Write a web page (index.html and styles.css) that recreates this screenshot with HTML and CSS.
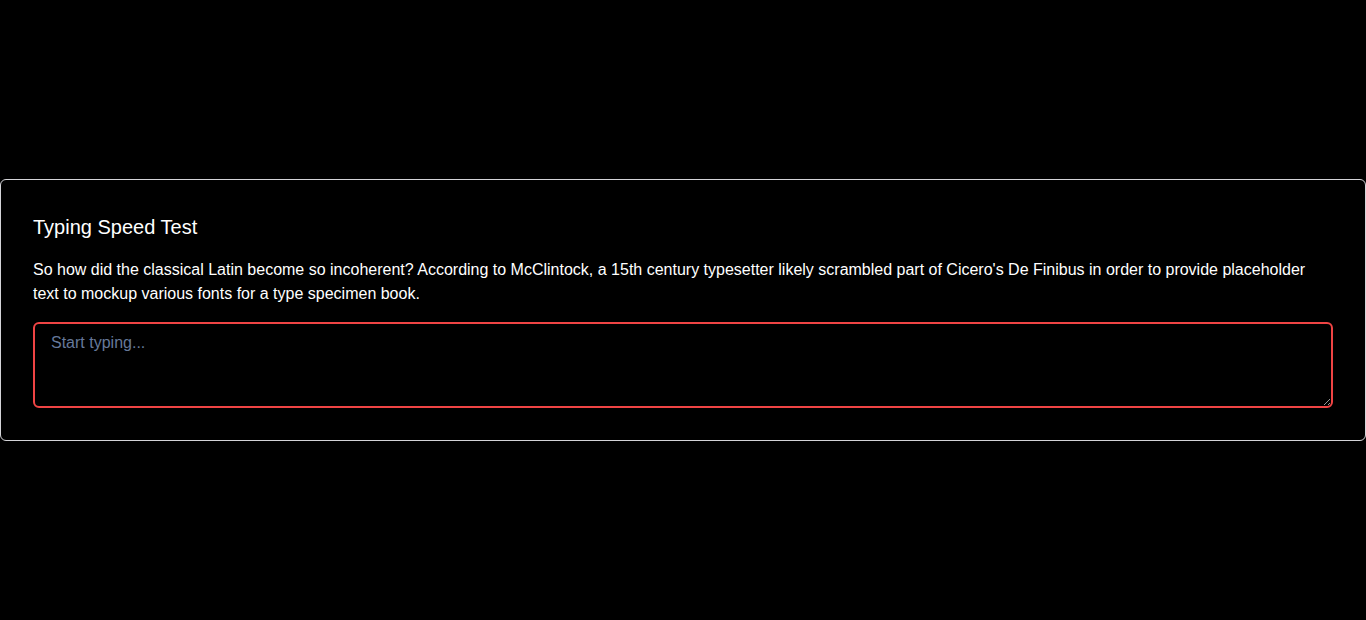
FILE: index.html
```html
<!DOCTYPE html>
<html lang="en">
<head>
<meta charset="utf-8">
<title>Typing Speed Test</title>
<link rel="stylesheet" href="styles.css">
</head>
<body>
<main class="page">
  <section class="card">
    <h1 class="card-title">Typing Speed Test</h1>
    <p class="card-text">So how did the classical Latin become so incoherent? According to McClintock, a 15th century typesetter likely scrambled part of Cicero's De Finibus in order to provide placeholder text to mockup various fonts for a type specimen book.</p>
    <textarea class="typing-input" placeholder="Start typing..."></textarea>
  </section>
</main>
</body>
</html>
```

FILE: styles.css
```css
* { box-sizing: border-box; }
html, body {
  margin: 0;
  padding: 0;
  background: #000;
  color: #fff;
  font-family: "Liberation Sans", Arial, sans-serif;
}
.page {
  min-height: 620px;
  display: flex;
  flex-direction: column;
  justify-content: center;
}
.card {
  border: 1px solid #d4d4d8;
  border-radius: 6px;
  padding: 33px 32px 32px;
  display: flex;
  flex-direction: column;
}
.card-title {
  margin: 0 0 17px;
  font-size: 20px;
  line-height: 28px;
  font-weight: 400;
}
.card-text {
  margin: 0 0 16px;
  font-size: 16px;
  line-height: 24px;
}
.typing-input {
  display: block;
  width: 100%;
  height: 86px;
  background: #000;
  color: #fff;
  border: 2px solid #ef4444;
  border-radius: 6px;
  padding: 10px 16px 8px;
  font-family: "Liberation Sans", Arial, sans-serif;
  font-size: 16px;
  outline: none;
}
.typing-input::placeholder {
  color: #66799a;
}
```
